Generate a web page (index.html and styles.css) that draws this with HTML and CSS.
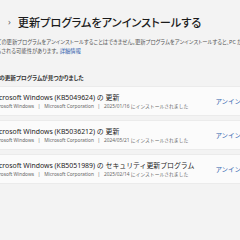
FILE: index.html
```html
<!DOCTYPE html>
<html lang="ja">
<head>
  <meta charset="UTF-8" />
  <meta name="viewport" content="width=device-width, initial-scale=1.0"/>
  <title>更新プログラムをアンインストールする</title>
  <link rel="stylesheet" href="styles.css">
</head>
<body>

  <div class="page">
    <header class="crumbs">
      <span class="chev">›</span>
      <h1>更新プログラムをアンインストールする</h1>
    </header>

    <div class="desc">
      <div class="line">すべての更新プログラムをアンインストールすることはできません。更新プログラムをアンインストールすると、PC が危険</div>
      <div class="line">にさらされる可能性があります。 <a href="#">詳細情報</a></div>
    </div>

    <div class="found">3 個の更新プログラムが見つかりました</div>

    <div class="updates">
      <div class="update">
        <div class="info">
          <div class="name">Microsoft Windows (KB5049624) の 更新</div>
          <div class="meta">Microsoft Windows <span class="sep">|</span> Microsoft Corporation <span class="sep">|</span> 2025/01/16 にインストールされました</div>
        </div>
        <a class="uninstall" href="#">アンインストール</a>
      </div>

      <div class="update">
        <div class="info">
          <div class="name">Microsoft Windows (KB5036212) の 更新</div>
          <div class="meta">Microsoft Windows <span class="sep">|</span> Microsoft Corporation <span class="sep">|</span> 2024/05/21 にインストールされました</div>
        </div>
        <a class="uninstall" href="#">アンインストール</a>
      </div>

      <div class="update">
        <div class="info">
          <div class="name">Microsoft Windows (KB5051989) の セキュリティ更新プログラム</div>
          <div class="meta">Microsoft Windows <span class="sep">|</span> Microsoft Corporation <span class="sep">|</span> 2025/02/14 にインストールされました</div>
        </div>
        <a class="uninstall" href="#">アンインストール</a>
      </div>
    </div>
  </div>

</body>
</html>
```

FILE: styles.css
```css
body {
  margin: 0;
  background-color: #f3f3f3;
  color: #1b1b1b;
  font-family: "Noto Sans", "Noto Sans CJK JP", sans-serif;
  overflow: hidden;
  width: 240px;
  height: 240px;
}

.page {
  padding-top: 13px;
}

.crumbs {
  display: flex;
  align-items: center;
  gap: 7px;
  padding-left: 8px;
  height: 18px;
}

.chev {
  font-size: 9px;
  color: #666;
  line-height: 1;
  margin-top: -2px;
}

h1 {
  margin: 0;
  font-size: 11.2px;
  font-weight: 500;
  line-height: 18px;
  font-feature-settings: "palt";
  font-family: "Noto Sans CJK JP", sans-serif;
  white-space: nowrap;
}

.desc {
  margin-top: 7px;
  margin-left: -13px;
  font-family: "Noto Sans CJK JP", sans-serif;
  font-feature-settings: "palt";
  font-size: 5.3px;
  line-height: 9px;
  color: #555;
  white-space: nowrap;
}

.desc a {
  color: #2f62ad;
  text-decoration: none;
}

.found {
  margin-top: 18px;
  margin-left: -11px;
  font-family: "Noto Sans CJK JP", sans-serif;
  font-feature-settings: "palt";
  font-size: 5.6px;
  font-weight: 700;
  line-height: 9px;
  color: #333;
  white-space: nowrap;
}

.updates {
  margin-top: 3px;
  margin-left: -22px;
  width: 300px;
  display: flex;
  flex-direction: column;
  gap: 4px;
}

.update {
  display: flex;
  align-items: center;
  height: 30px;
  padding: 0 10px 0 12px;
  background: #fbfbfb;
  border: 1px solid #ebebeb;
  border-radius: 4px;
  box-sizing: border-box;
}

.info {
  flex: 1;
  white-space: nowrap;
}

.name {
  font-size: 6.9px;
  line-height: 9px;
  color: #1b1b1b;
}

.meta {
  font-size: 4.8px;
  line-height: 8px;
  color: #666;
}

.sep {
  margin: 0 2.5px;
}

.uninstall {
  font-family: "Noto Sans CJK JP", sans-serif;
  font-size: 6.5px;
  color: #2f62ad;
  text-decoration: none;
  white-space: nowrap;
}
```
